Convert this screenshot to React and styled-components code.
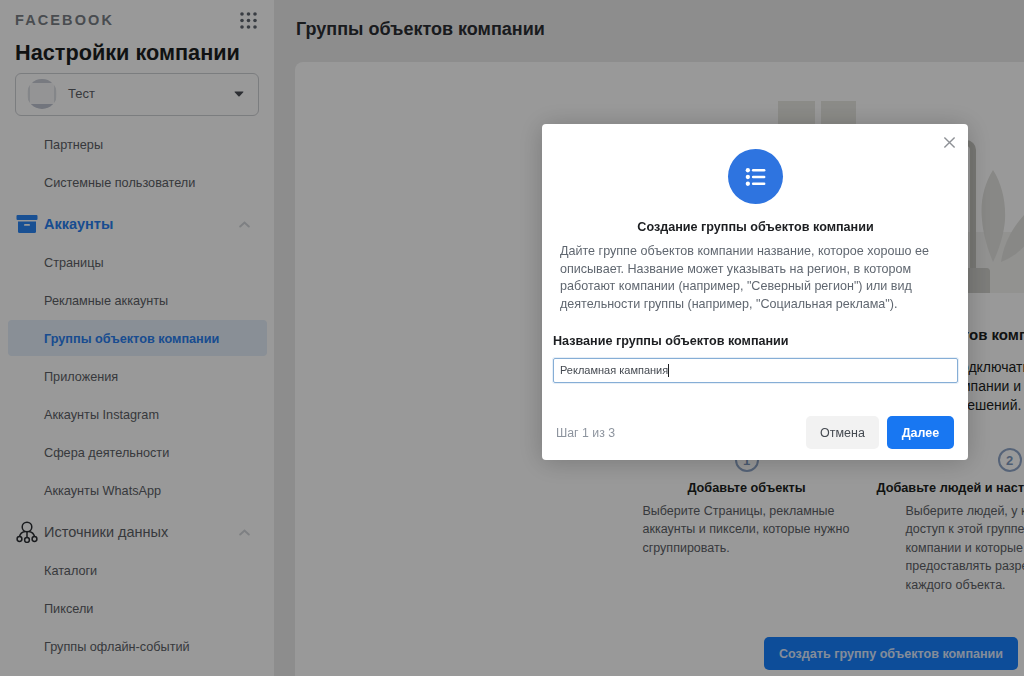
import React from "react";
import styled, { createGlobalStyle } from "styled-components";

const Global = createGlobalStyle`
  html, body { margin: 0; padding: 0; height: 100%; overflow: hidden; }
  body { font-family: "Liberation Sans", Arial, sans-serif; color: #1c1e21; }
  * { box-sizing: border-box; }
`;

const Page = styled.div`
  display: flex;
  width: 1024px;
  height: 676px;
  overflow: hidden;
  background: #ebebeb;
`;
const Sidebar = styled.aside`
  flex: 0 0 274px;
  background: #fff;
  padding-top: 12px;
  overflow: hidden;
`;
const LogoRow = styled.div`
  display: flex;
  align-items: center;
  justify-content: space-between;
  height: 16px;
  padding: 0 17px 0 15px;
`;
const Logo = styled.span`
  font-size: 14.5px;
  font-weight: 700;
  letter-spacing: 2.1px;
  color: #7a7f86;
`;
const Heading = styled.h1`
  margin: 11px 0 0 15px;
  font-size: 21.7px;
  line-height: 28px;
  font-weight: 700;
`;
const Selector = styled.div`
  display: flex;
  align-items: center;
  height: 43px;
  margin: 6px 15px 10px;
  padding: 0 14px 2px 11px;
  border: 1px solid #ced0d4;
  border-radius: 6px;
  font-size: 13px;
  color: #5c6066;
`;
const SelectorName = styled.span`
  flex: 1;
  margin-left: 11px;
`;
const Item = styled.div`
  display: flex;
  align-items: center;
  height: 36px;
  margin: 0 7px 2px 8px;
  padding: 2px 0 0 36px;
  border-radius: 4px;
  font-size: 12.7px;
  font-weight: ${(p) => (p.$active ? 700 : 400)};
  color: ${(p) => (p.$active ? "#2a7ff0" : "#5c6066")};
  background: ${(p) => (p.$active ? "#e4eefa" : "transparent")};
`;
const Section = styled.div`
  display: flex;
  align-items: center;
  gap: 6px;
  height: 38px;
  margin: 5px 0 1px;
  padding: 0 24px 0 16px;
  font-size: 14.5px;
  font-weight: ${(p) => (p.$active ? 700 : 400)};
  color: ${(p) => (p.$active ? "#2a7ff0" : "#5c6066")};
`;
const SectionName = styled.span`
  flex: 1;
`;
const Main = styled.main`
  flex: 1;
  min-width: 0;
  overflow: hidden;
  padding-left: 21px;
`;
const PageTitle = styled.h2`
  display: flex;
  align-items: center;
  height: 62px;
  margin: 0;
  padding: 0 0 4px 1px;
  font-size: 18px;
  font-weight: 700;
  color: #2b2e33;
`;
const Card = styled.section`
  width: 729px;
  height: 640px;
  background: #fff;
  border-radius: 8px 0 0 0;
  overflow: hidden;
`;
const Hero = styled.div`
  width: 1166px;
  display: flex;
  flex-direction: column;
  align-items: center;
`;
const Art = styled.svg`
  display: block;
  flex: none;
`;
const HeroTitle = styled.h3`
  margin: 33px 0 0;
  font-size: 15px;
  line-height: 18px;
  font-weight: 700;
`;
const HeroText = styled.p`
  margin: 14px 0 0;
  font-size: 14px;
  line-height: 19px;
  text-align: center;
  color: #1c1e21;
`;
const Steps = styled.div`
  display: flex;
  gap: 33px;
  margin-top: 33px;
`;
const Step = styled.div`
  width: 230px;
`;
const StepNum = styled.div`
  width: 24px;
  height: 24px;
  margin: 0 auto;
  border: 2px solid #8fa6c8;
  border-radius: 50%;
  display: flex;
  align-items: center;
  justify-content: center;
  font-size: 13px;
  font-weight: 700;
  color: #7f9abf;
`;
const StepTitle = styled.div`
  margin-top: 7px;
  font-size: 12.7px;
  line-height: 18px;
  font-weight: 700;
  white-space: nowrap;
  display: flex;
  justify-content: center;
`;
const StepText = styled.p`
  margin: 5px 0 0;
  padding-left: 11px;
  font-size: 12.5px;
  line-height: 18.4px;
  color: #5c6066;
  white-space: nowrap;
`;
const Footer = styled.div`
  display: flex;
  justify-content: flex-end;
  width: 729px;
  padding-right: 6px;
  margin-top: 43px;
`;
const CreateButton = styled.button`
  width: 254px;
  height: 33px;
  border: 0;
  border-radius: 5px;
  background: #1680ff;
  font: 700 12.6px "Liberation Sans", Arial, sans-serif;
  color: #dce9ff;
`;
const Overlay = styled.div`
  position: fixed;
  inset: 0;
  background: rgba(0, 0, 0, 0.4);
`;
const Modal = styled.div`
  position: absolute;
  left: 542px;
  top: 124px;
  width: 426px;
  height: 336px;
  display: flex;
  flex-direction: column;
  padding: 25px 10px 11px 11px;
  background: #fff;
  border-radius: 4px;
  box-shadow: 0 2px 26px rgba(0, 0, 0, 0.22);
`;
const Close = styled.button`
  position: absolute;
  top: 12px;
  right: 12px;
  width: 13px;
  height: 13px;
  padding: 0;
  border: 0;
  background: none;
  color: #8d9095;
  display: flex;
`;
const Badge = styled.div`
  align-self: center;
  width: 55px;
  height: 55px;
  margin-right: 1px;
  border-radius: 50%;
  background: #2e74e0;
  display: flex;
  align-items: center;
  justify-content: center;
`;
const ModalTitle = styled.h4`
  margin: 14px 0 0;
  font-size: 12.6px;
  line-height: 18px;
  font-weight: 700;
  text-align: center;
  color: #1c1e21;
`;
const ModalText = styled.p`
  margin: 7px 0 0 7px;
  font-size: 12.57px;
  line-height: 17.7px;
  color: #606770;
  white-space: nowrap;
`;
const Label = styled.label`
  display: block;
  margin-top: 18px;
  font-size: 12.6px;
  line-height: 18px;
  font-weight: 700;
  color: #1c1e21;
`;
const InputBox = styled.div`
  display: flex;
  align-items: center;
  height: 25px;
  margin-top: 8px;
  padding-left: 6px;
  border: 1px solid #86aed6;
  border-radius: 2px;
  box-shadow: 0 0 0 1px rgba(134, 174, 214, 0.2);
  font-size: 11px;
  color: #444950;
`;
const Caret = styled.span`
  width: 1px;
  height: 13px;
  background: #1c1e21;
`;
const ModalFooter = styled.div`
  display: flex;
  align-items: center;
  gap: 8px;
  margin-top: auto;
  padding: 0 4px 0 3px;
`;
const StepCount = styled.span`
  flex: 1;
  font-size: 12.3px;
  color: #8d949e;
`;
const Button = styled.button`
  height: 33px;
  width: ${(p) => (p.$primary ? "67px" : "73px")};
  border: 0;
  border-radius: 5px;
  background: ${(p) => (p.$primary ? "#1877f2" : "#f2f2f2")};
  color: ${(p) => (p.$primary ? "#fff" : "#444950")};
  font: ${(p) => (p.$primary ? 700 : 400)} 12.5px "Liberation Sans", Arial, sans-serif;
`;

const GridIcon = () => (
  <svg width="17" height="17" viewBox="0 0 17 17" fill="#606770">
    {[2, 8.5, 15].flatMap((y) =>
      [2, 8.5, 15].map((x) => <circle key={`${x}-${y}`} cx={x} cy={y} r="1.8" />)
    )}
  </svg>
);
const Avatar = () => (
  <svg width="30" height="30" viewBox="0 0 30 30">
    <defs>
      <clipPath id="av"><circle cx="15" cy="15" r="15" /></clipPath>
    </defs>
    <g clipPath="url(#av)">
      <rect width="30" height="30" fill="#f7f7f8" />
      <rect width="30" height="4" fill="#c8ccd6" />
      <rect y="25" width="30" height="5" fill="#bec3d0" />
      <rect x="1" y="4" width="2" height="21" fill="#dcdfe4" />
      <rect x="27" y="4" width="2" height="21" fill="#dcdfe4" />
    </g>
  </svg>
);
const CaretIcon = () => (
  <svg width="10" height="6" viewBox="0 0 11 7" fill="#4b4f56">
    <path d="M1 0.5h9c.6 0 .9.6.5 1L6.2 6.2c-.4.4-1 .4-1.4 0L.5 1.500c-.4-.4-.1-1 .5-1z" />
  </svg>
);
const Chevron = () => (
  <svg width="11" height="7" viewBox="0 0 11 7" fill="none" stroke="#d3d6da" strokeWidth="2" strokeLinecap="round">
    <path d="M1.2 5.5 5.5 1.5 9.8 5.5" />
  </svg>
);
const BoxIcon = () => (
  <svg width="22" height="18" viewBox="0 0 21 18" fill="#2a86f5">
    <rect x="0" y="0" width="21" height="5" rx="1" />
    <path d="M1.5 6.5h18V16.5a1.5 1.5 0 0 1-1.5 1.5H3a1.5 1.5 0 0 1-1.5-1.5z" />
    <rect x="7.5" y="9" width="6" height="1.8" rx=".9" fill="#fff" />
  </svg>
);
const SourceIcon = () => (
  <svg width="22" height="22" viewBox="0 0 22 22" fill="none" stroke="#2b2e33" strokeWidth="1.5">
    <circle cx="11" cy="6" r="4.8" />
    <path d="M3.5 15.5c.6-2.6 2.9-4.6 5.5-5M18.5 15.5c-.6-2.6-2.9-4.6-5.500-5M11 11v6" />
    <circle cx="3.5" cy="18" r="2.4" />
    <circle cx="11" cy="19" r="2.4" />
    <circle cx="18.5" cy="18" r="2.4" />
  </svg>
);
const ListIcon = () => (
  <svg width="21" height="18" viewBox="0 0 22 20" fill="#fff">
    <circle cx="2.5" cy="2.5" r="2.4" />
    <circle cx="2.5" cy="10" r="2.4" />
    <circle cx="2.5" cy="17.5" r="2.4" />
    <rect x="7" y="1.2" width="15" height="2.6" rx="1.3" />
    <rect x="7" y="8.7" width="15" height="2.6" rx="1.3" />
    <rect x="7" y="16.2" width="15" height="2.6" rx="1.3" />
  </svg>
);
const CloseIcon = () => (
  <svg width="13" height="13" viewBox="0 0 14 14" fill="none" stroke="currentColor" strokeWidth="1.5">
    <path d="M1.5 1.5 12.5 12.5M12.5 1.5 1.5 12.5" />
  </svg>
);
const Illustration = () => (
  <Art width="1166" height="231" viewBox="0 0 1166 231">
    <rect x="483" y="39" width="37" height="40" fill="#e8e8e2" />
    <rect x="526" y="39" width="35" height="40" fill="#e8e8e2" />
    <rect x="640" y="170" width="120" height="61" fill="#f3f3f1" />
    <path d="M665 81h6c4 0 7 3 7 7V206" fill="none" stroke="#c8c8c2" strokeWidth="6" />
    <path d="M668 206h24c1.500 0 3 1.500 3 3v22h-29v-23c0-1 1-2 2-2z" fill="#d0d0cc" />
    <path d="M698 108c-9 14-13 32-11 50 1 14 6 30 11 42 6-12 11-28 12-42 1-18-3-36-12-50z" fill="#e3e3df" />
    <path d="M706 200c4-26 18-46 44-66-2 30-18 56-44 66z" fill="#e3e3df" />
  </Art>
);

const firstItems = ["Партнеры", "Системные пользователи"];
const accountItems = ["Страницы", "Рекламные аккаунты", "Группы объектов компании", "Приложения", "Аккаунты Instagram", "Сфера деятельности", "Аккаунты WhatsApp"];
const sourceItems = ["Каталоги", "Пиксели", "Группы офлайн-событий"];

export default function App() {
  return (
    <>
      <Global />
      <Page>
        <Sidebar>
          <LogoRow>
            <Logo>FACEBOOK</Logo>
            <GridIcon />
          </LogoRow>
          <Heading>Настройки компании</Heading>
          <Selector>
            <Avatar />
            <SelectorName>Тест</SelectorName>
            <CaretIcon />
          </Selector>
          {firstItems.map((t) => <Item key={t}>{t}</Item>)}
          <Section $active>
            <BoxIcon />
            <SectionName>Аккаунты</SectionName>
            <Chevron />
          </Section>
          {accountItems.map((t) => (
            <Item key={t} $active={t === "Группы объектов компании"}>{t}</Item>
          ))}
          <Section>
            <SourceIcon />
            <SectionName>Источники данных</SectionName>
            <Chevron />
          </Section>
          {sourceItems.map((t) => <Item key={t}>{t}</Item>)}
        </Sidebar>
        <Main>
          <PageTitle>Группы объектов компании</PageTitle>
          <Card>
            <Hero>
              <Illustration />
              <HeroTitle>Начните работать с группами объектов компании</HeroTitle>
              <HeroText>
                Группы объектов компании позволяют подключать все
                <br />
                людей, объекты, партнерские и другие компании и их все
                <br />
                с помощью единых настроек и разрешений.
              </HeroText>
              <Steps>
                <Step>
                  <StepNum>1</StepNum>
                  <StepTitle>Добавьте объекты</StepTitle>
                  <StepText>
                    Выберите Страницы, рекламные
                    <br />
                    аккаунты и пиксели, которые нужно
                    <br />
                    сгруппировать.
                  </StepText>
                </Step>
                <Step>
                  <StepNum>2</StepNum>
                  <StepTitle>Добавьте людей и настройте всем доступ</StepTitle>
                  <StepText>
                    Выберите людей, у которых будет
                    <br />
                    доступ к этой группе объектов
                    <br />
                    компании и которые смогут
                    <br />
                    предоставлять разрешения для
                    <br />
                    каждого объекта.
                  </StepText>
                </Step>
              </Steps>
            </Hero>
            <Footer>
              <CreateButton>Создать группу объектов компании</CreateButton>
            </Footer>
          </Card>
        </Main>
      </Page>
      <Overlay>
        <Modal>
          <Close aria-label="Закрыть"><CloseIcon /></Close>
          <Badge><ListIcon /></Badge>
          <ModalTitle>Создание группы объектов компании</ModalTitle>
          <ModalText>
            Дайте группе объектов компании название, которое хорошо ее
            <br />
            описывает. Название может указывать на регион, в котором
            <br />
            работают компании (например, "Северный регион") или вид
            <br />
            деятельности группы (например, "Социальная реклама").
          </ModalText>
          <Label>Название группы объектов компании</Label>
          <InputBox>Рекламная кампания<Caret /></InputBox>
          <ModalFooter>
            <StepCount>Шаг 1 из 3</StepCount>
            <Button>Отмена</Button>
            <Button $primary>Далее</Button>
          </ModalFooter>
        </Modal>
      </Overlay>
    </>
  );
}
